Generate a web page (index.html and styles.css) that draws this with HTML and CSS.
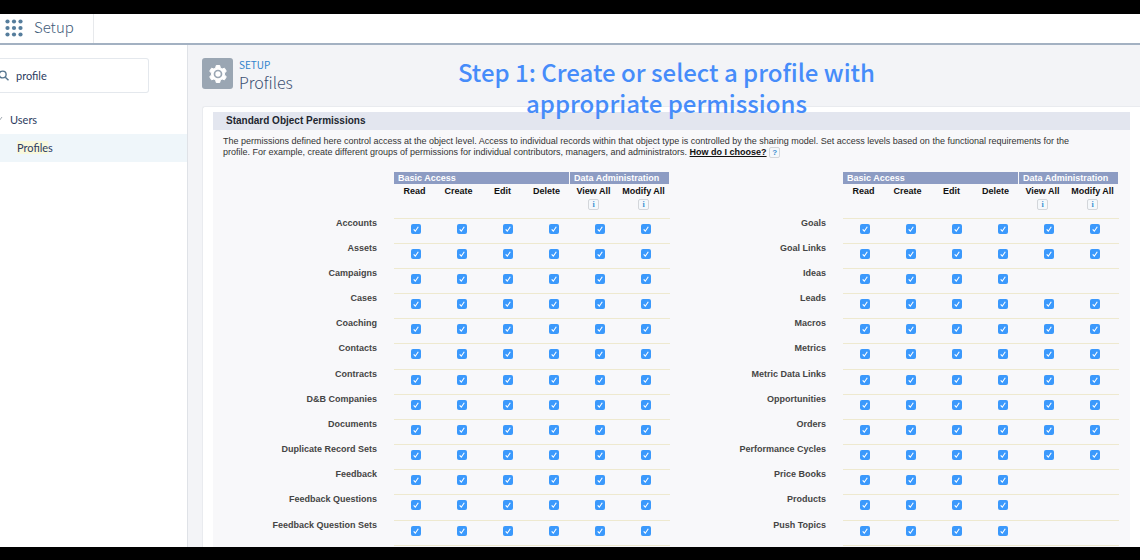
FILE: index.html
```html
<!DOCTYPE html>
<html lang="en">
<head>
<meta charset="utf-8">
<title>Setup - Profiles</title>
<link rel="stylesheet" href="styles.css">
</head>
<body>
<header class="topbar">
  <button class="launcher" aria-label="App launcher">
    <svg viewBox="0 0 18 18" width="18" height="18" fill="#557d9c"><circle cx="2.5" cy="2.5" r="2.1"/><circle cx="9" cy="2.5" r="2.1"/><circle cx="15.5" cy="2.5" r="2.1"/><circle cx="2.5" cy="9" r="2.1"/><circle cx="9" cy="9" r="2.1"/><circle cx="15.5" cy="9" r="2.1"/><circle cx="2.5" cy="15.5" r="2.1"/><circle cx="9" cy="15.5" r="2.1"/><circle cx="15.5" cy="15.5" r="2.1"/></svg>
  </button>
  <span class="app-name">Setup</span>
</header>
<div class="layout">
  <nav class="sidebar" aria-label="Setup">
    <label class="search">
      <svg viewBox="0 0 9 11" width="9" height="11" fill="none" stroke="#55758f" stroke-width="1.4"><circle cx="2.7" cy="4.5" r="3.4"/><path d="M5.3 7.2 8.5 10.3"/></svg>
      <input class="search-input" type="text" value="profile" aria-label="Quick find">
    </label>
    <div class="tree-parent">
      <svg viewBox="0 0 6 6" width="6" height="6" fill="none" stroke="#a3aab2"><path d="M0 3 2 5 5 1"/></svg>
      <a class="tree-link" href="#users">Users</a>
    </div>
    <a class="tree-child" href="#profiles"><mark class="hit">Profile</mark>s</a>
  </nav>
  <main class="content">
    <div class="page-head">
      <span class="page-icon">
        <svg viewBox="0 0 20 20" width="20" height="20"><path fill="#fff" stroke="#fff" stroke-width="1" stroke-linejoin="round" d="M8.2 1.5h3.6l.5 2.5 1.8 1 2.4-.8 1.8 3.1-1.9 1.7v2l1.9 1.7-1.8 3.1-2.4-.8-1.8 1-.5 2.5H8.2l-.5-2.5-1.8-1-2.4.8-1.8-3.1 1.9-1.7V9L1.7 7.3l1.8-3.1 2.4.8 1.8-1z"/><circle cx="10" cy="10" r="3.5" fill="#fff" stroke="#9aa6b3" stroke-width="1.7"/></svg>
      </span>
      <div class="page-titles">
        <span class="eyebrow">SETUP</span>
        <h1 class="title">Profiles</h1>
      </div>
    </div>
    <section class="card">
      <div class="panel">
        <h2 class="panel-title">Standard Object Permissions</h2>
        <p class="intro">The permissions defined here control access at the object level. Access to individual records within that object type is controlled by the sharing model. Set access levels based on the functional requirements for the profile. For example, create different groups of permissions for individual contributors, managers, and administrators. <a class="help-link" href="#help">How do I choose?</a> <button class="help" aria-label="Help">?</button></p>
        <div class="tables">
          <table class="perms" id="perms-left"></table>
          <table class="perms" id="perms-right"></table>
        </div>
      </div>
    </section>
    <p class="caption">Step 1: Create or select a profile with<br>appropriate permissions</p>
  </main>
</div>
<script src="script.js"></script>
</body>
</html>
```
FILE: styles.css
```css
* { box-sizing: border-box; }
body {
  margin: 0;
  height: 100vh;
  padding: 14px 0 13px;
  display: flex;
  flex-direction: column;
  overflow: hidden;
  background: #000;
  font-family: "Liberation Sans", Arial, sans-serif;
}
button { padding: 0; border: 0; background: none; font: inherit; }
a { color: inherit; text-decoration: none; }
.topbar {
  flex: none;
  display: flex;
  align-items: stretch;
  height: 31px;
  padding-left: 5px;
  background: #fff;
  border-bottom: 2px solid #a3b1c2;
}
.launcher { display: flex; align-items: center; padding-bottom: 2px; }
.app-name {
  width: 71px;
  padding-left: 11px;
  border-right: 1px solid #e7e9ec;
  font-family: "Noto Sans CJK SC", "Open Sans", sans-serif;
  font-weight: 300;
  font-size: 15px;
  line-height: 26px;
  color: #3f5c7a;
}
.layout { flex: 1; min-height: 0; display: flex; }
.sidebar {
  flex: none;
  width: 188px;
  padding-top: 13px;
  background: #fff;
  border-right: 1px solid #dfe2e7;
  font-family: Lato, sans-serif;
  font-size: 11px;
  color: #2c3b60;
}
.search {
  display: flex;
  align-items: center;
  gap: 7px;
  width: 149px;
  height: 35px;
  border: 1px solid #e4e8ed;
  border-left: 0;
  border-radius: 0 3px 3px 0;
}
.search-input {
  width: 120px;
  padding: 0;
  border: 0;
  outline: 0;
  background: none;
  font: inherit;
  color: inherit;
}
.tree-parent {
  display: flex;
  align-items: center;
  gap: 7px;
  height: 24px;
  margin-top: 14px;
  margin-left: -3px;
}
.tree-child {
  display: block;
  height: 28px;
  margin-top: 3px;
  padding-left: 17px;
  line-height: 28px;
  background: #eff6fa;
}
.hit { background: #f8f8dd; color: inherit; }
.content {
  position: relative;
  flex: 1;
  min-width: 0;
  display: flex;
  flex-direction: column;
  padding: 13px 0 0 14px;
  background: #f3f4f7;
}
.page-head { flex: none; display: flex; gap: 6px; height: 48px; }
.page-icon {
  display: flex;
  align-items: center;
  justify-content: center;
  width: 31px;
  height: 31px;
  border-radius: 3px;
  background: #9aa6b3;
}
.page-titles {
  display: flex;
  flex-direction: column;
  font-family: "Noto Sans CJK SC", "Open Sans", sans-serif;
}
.eyebrow { font-size: 10px; line-height: 14px; color: #2f83cc; }
.title { margin: 0; font-weight: 300; font-size: 16px; line-height: 20px; color: #3c5072; }
.card {
  flex: 1;
  min-height: 0;
  padding: 5px 10px 0;
  background: #fff;
  border: 1px solid #e9ebef;
  border-right: 0;
  border-bottom: 0;
  border-radius: 3px 0 0 0;
}
.panel { height: 100%; background: #f8f8fa; overflow: hidden; }
.panel-title {
  margin: 0;
  padding-left: 13px;
  background: #e3e6ef;
  font-size: 10px;
  line-height: 18px;
  color: #222630;
}
.intro {
  margin: 0;
  padding: 6px 36px 0 10px;
  font-size: 9px;
  line-height: 11px;
  color: #333;
}
.help-link { font-weight: bold; color: #111; text-decoration: underline; }
.help, .info {
  display: inline-block;
  width: 11px;
  height: 11px;
  border: 1px solid #d3d6da;
  border-radius: 2px;
  background: #f5f8fb;
  font-weight: bold;
  font-size: 8px;
  line-height: 9px;
  text-align: center;
  color: #3b8fd0;
}
.info { display: block; margin: 2px auto 0; font-family: "Liberation Serif", serif; }
.tables {
  display: grid;
  grid-template-columns: 1fr 1fr;
  margin-top: 14px;
  padding: 0 11px 0 8px;
}
.perms { display: block; font-size: 9px; }
.perms thead, .perms tbody { display: block; }
.perms tr { display: grid; }
.perms td, .perms th { padding: 0; }
.group-row { grid-template-columns: 1fr 176px 100px; }
.perms .group {
  padding-left: 4px;
  margin-right: 1px;
  background: #8d9cc3;
  line-height: 12px;
  text-align: left;
  color: #fff;
}
.head-row { grid-template-columns: 1fr repeat(4, 44px) repeat(2, 50px); height: 34px; }
.perms .col { padding: 2px 3px 0 0; line-height: 11px; color: #111; }
.object-row { grid-template-columns: 1fr repeat(6, 46px); height: 25px; }
.object-row:nth-child(6n) { height: 26px; }
.perms .object {
  padding-right: 17px;
  line-height: 11px;
  text-align: right;
  color: #454545;
}
.perms .cell {
  display: flex;
  justify-content: center;
  padding: 5px 2px 0 0;
  border-top: 1px solid #eee9cf;
}
.end-row { grid-template-columns: 1fr 276px; }
.perms .end { border-top: 1px solid #eee9cf; }
.check {
  appearance: none;
  width: 10px;
  height: 10px;
  margin: 0;
  border-radius: 2px;
  background: #3b99fc url("data:image/svg+xml,%3Csvg xmlns='http://www.w3.org/2000/svg' viewBox='0 0 10 10'%3E%3Cpath d='M2.7 5.3 4.3 7.2 7.3 2.7' fill='none' stroke='white' stroke-width='1.1'/%3E%3C/svg%3E");
}
.caption {
  position: absolute;
  top: 11px;
  left: 0;
  right: 0;
  margin: 0;
  padding-left: 5px;
  text-align: center;
  font-family: "Noto Sans CJK SC", "Open Sans", sans-serif;
  font-weight: 500;
  font-size: 24px;
  line-height: 31px;
  color: #468cfa;
}
```
FILE: script.js
```js
const columns = ["Read", "Create", "Edit", "Delete", "View All", "Modify All"];

const left = [
  ["Accounts", 6], ["Assets", 6], ["Campaigns", 6], ["Cases", 6],
  ["Coaching", 6], ["Contacts", 6], ["Contracts", 6], ["D&B Companies", 6],
  ["Documents", 6], ["Duplicate Record Sets", 6], ["Feedback", 6],
  ["Feedback Questions", 6], ["Feedback Question Sets", 6]
];
const right = [
  ["Goals", 6], ["Goal Links", 6], ["Ideas", 4], ["Leads", 6],
  ["Macros", 6], ["Metrics", 6], ["Metric Data Links", 6],
  ["Opportunities", 6], ["Orders", 6], ["Performance Cycles", 6],
  ["Price Books", 4], ["Products", 4], ["Push Topics", 4]
];

function render(id, objects) {
  const heads = columns.map((name, i) =>
    `<th class="col" scope="col">${name}${i > 3 ? `<button class="info" aria-label="About ${name}">i</button>` : ""}</th>`
  ).join("");
  const rows = objects.map(([object, count]) => {
    const label = object.replace("&", "&amp;");
    const cells = columns.map((name, i) =>
      `<td class="cell">${i < count ? `<input class="check" type="checkbox" checked aria-label="${label}: ${name}">` : ""}</td>`
    ).join("");
    return `<tr class="object-row"><th class="object" scope="row">${label}</th>${cells}</tr>`;
  }).join("");
  document.getElementById(id).innerHTML =
    `<thead><tr class="group-row"><td></td><th class="group">Basic Access</th><th class="group">Data Administration</th></tr>` +
    `<tr class="head-row"><td></td>${heads}</tr></thead>` +
    `<tbody>${rows}<tr class="end-row"><td></td><td class="end"></td></tr></tbody>`;
}

render("perms-left", left);
render("perms-right", right);
```
